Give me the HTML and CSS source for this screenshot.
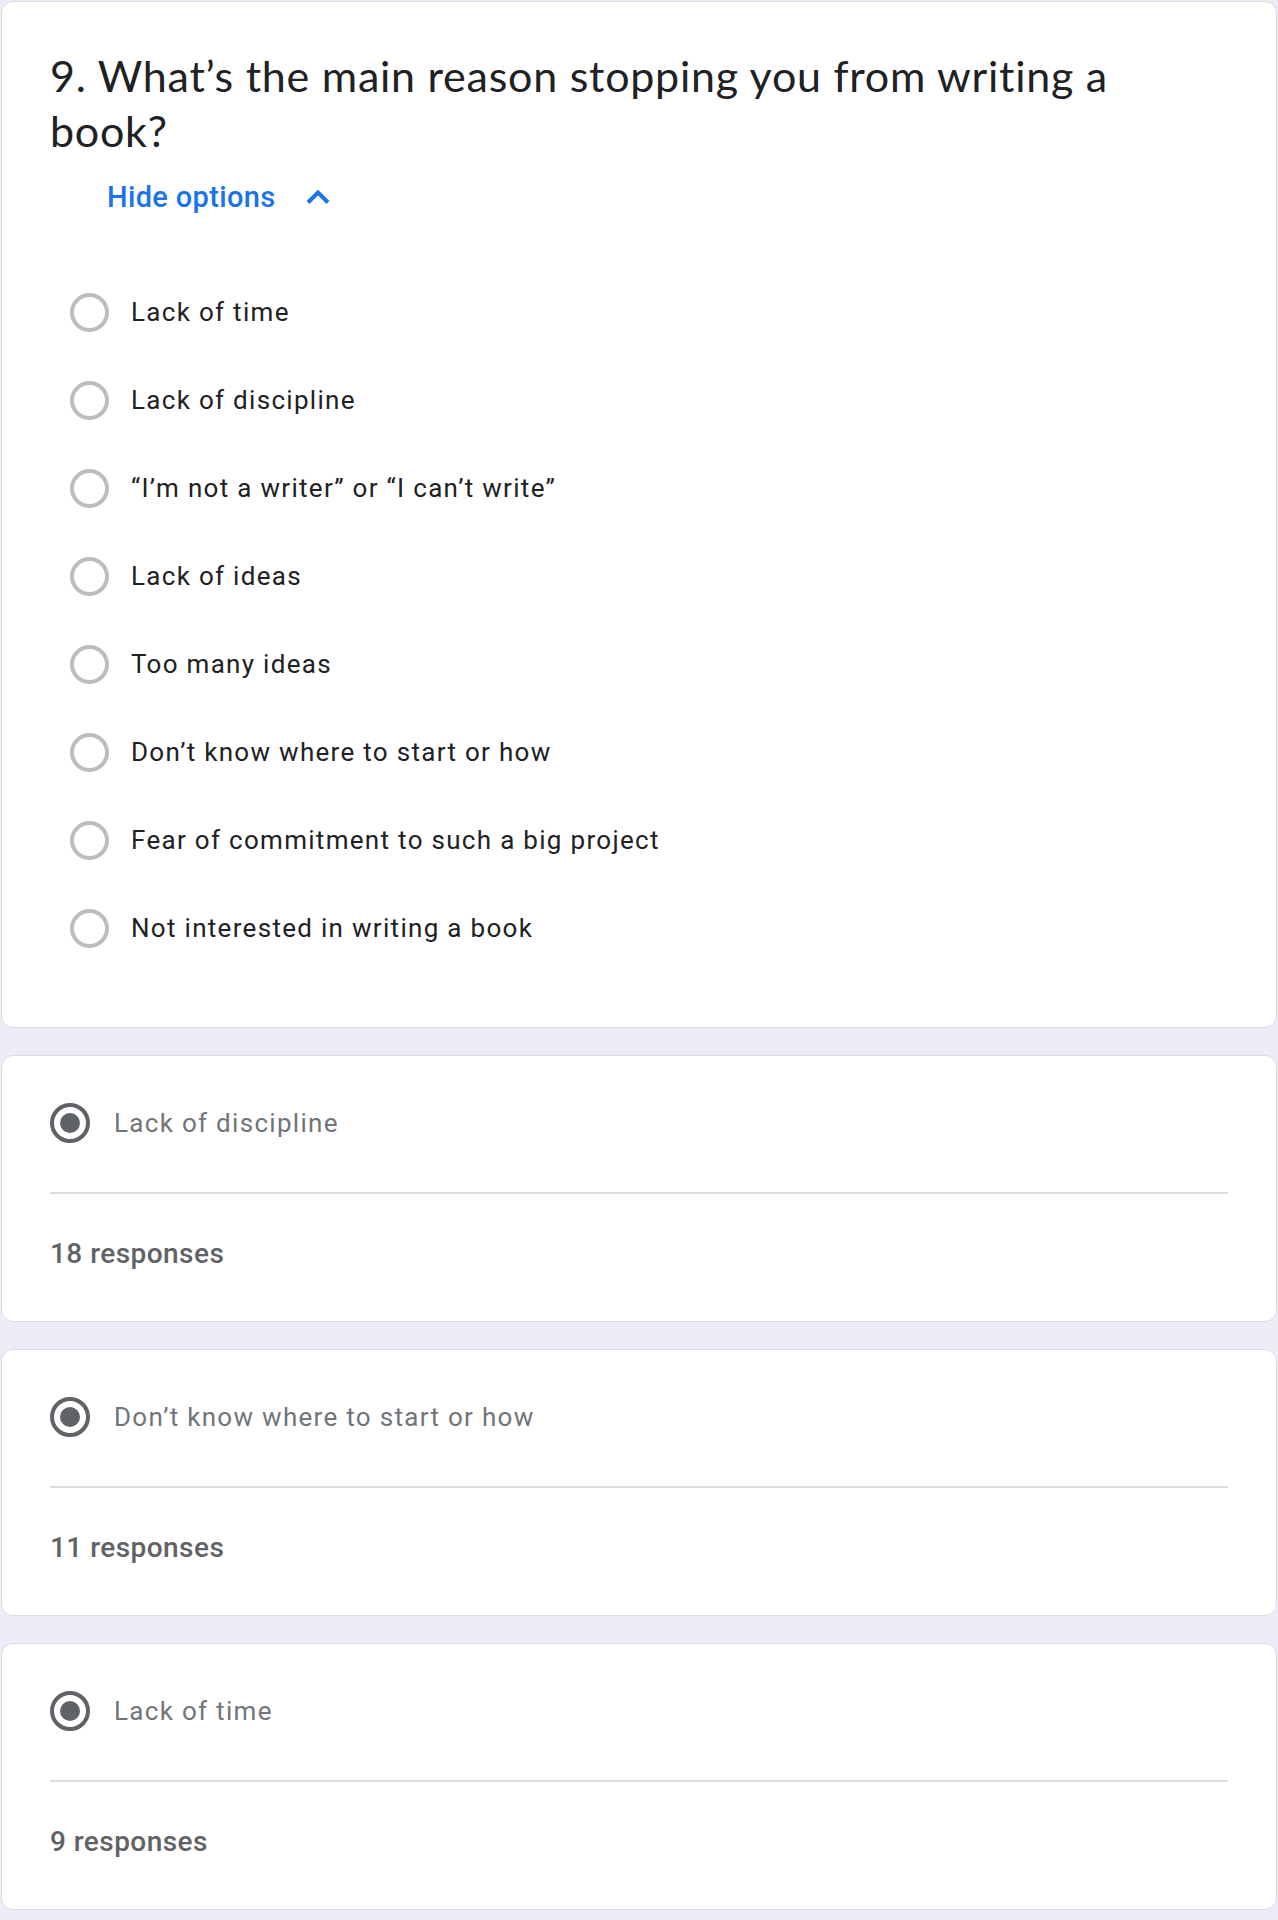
FILE: index.html
```html
<!DOCTYPE html>
<html lang="en">
<head>
<meta charset="utf-8">
<title>Form responses</title>
<link rel="stylesheet" href="styles.css">
</head>
<body>
<main class="page">
  <section class="card question">
    <h1 class="q-title">9. What’s the main reason stopping you from writing a book?</h1>
    <div class="toggle">
      <span class="toggle-label">Hide options</span>
      <svg class="chev" width="26" height="16" viewBox="0 0 26 16" aria-hidden="true"><polyline points="3,13.5 13,3.5 23,13.5" fill="none" stroke="#1a73e8" stroke-width="4"/></svg>
    </div>
    <ul class="options">
      <li class="option"><span class="radio"></span><span class="opt-text">Lack of time</span></li>
      <li class="option"><span class="radio"></span><span class="opt-text">Lack of discipline</span></li>
      <li class="option"><span class="radio"></span><span class="opt-text">“I’m not a writer” or “I can’t write”</span></li>
      <li class="option"><span class="radio"></span><span class="opt-text">Lack of ideas</span></li>
      <li class="option"><span class="radio"></span><span class="opt-text">Too many ideas</span></li>
      <li class="option"><span class="radio"></span><span class="opt-text">Don’t know where to start or how</span></li>
      <li class="option"><span class="radio"></span><span class="opt-text">Fear of commitment to such a big project</span></li>
      <li class="option"><span class="radio"></span><span class="opt-text">Not interested in writing a book</span></li>
    </ul>
  </section>

  <section class="card result">
    <div class="choice"><span class="radio checked"></span><span class="choice-text">Lack of discipline</span></div>
    <hr class="divider">
    <p class="count">18 responses</p>
  </section>

  <section class="card result">
    <div class="choice"><span class="radio checked"></span><span class="choice-text">Don’t know where to start or how</span></div>
    <hr class="divider">
    <p class="count">11 responses</p>
  </section>

  <section class="card result">
    <div class="choice"><span class="radio checked"></span><span class="choice-text">Lack of time</span></div>
    <hr class="divider">
    <p class="count">9 responses</p>
  </section>
</main>
</body>
</html>
```

FILE: styles.css
```css
html, body {
  margin: 0;
  padding: 0;
}

body {
  background: #f0ebf8;
  font-family: Roboto, "Liberation Sans", sans-serif;
  color: #202124;
}

.page {
  display: flex;
  flex-direction: column;
  gap: 27px;
  padding: 1px 1px 0 1px;
}

.card {
  background: #ffffff;
  border: 1px solid #dadce0;
  border-radius: 12px;
  box-sizing: border-box;
}

.question {
  height: 1027px;
  padding: 46px 48px 0 48px;
}

.q-title {
  margin: 0;
  max-width: 1100px;
  font-family: Lato, "Open Sans", sans-serif;
  font-weight: 400;
  font-size: 43px;
  line-height: 55px;
  letter-spacing: 0.75px;
  color: #202124;
}

.toggle {
  display: flex;
  align-items: center;
  gap: 29px;
  height: 40px;
  margin-top: 19px;
  padding-left: 57px;
}

.toggle-label {
  font-family: Roboto, sans-serif;
  font-weight: 500;
  font-size: 29px;
  letter-spacing: 0.35px;
  color: #1a73e8;
}

.chev {
  display: block;
}

.options {
  list-style: none;
  margin: 51px 0 0;
  padding: 0 0 0 20px;
}

.option {
  display: flex;
  align-items: center;
  gap: 22px;
  height: 88px;
}

.radio {
  display: flex;
  align-items: center;
  justify-content: center;
  flex: none;
  width: 39px;
  height: 39px;
  border: 4px solid #bdbdbd;
  border-radius: 50%;
  box-sizing: border-box;
}

.opt-text {
  font-family: Roboto, sans-serif;
  font-size: 26px;
  letter-spacing: 1.3px;
  color: #202124;
}

.result {
  height: 267px;
  padding: 47px 48px 0 48px;
}

.choice {
  display: flex;
  align-items: center;
  gap: 24px;
  height: 40px;
}

.radio.checked {
  width: 40px;
  height: 40px;
  border-color: #5f6368;
}

.radio.checked::after {
  content: "";
  width: 20px;
  height: 20px;
  border-radius: 50%;
  background: #5f6368;
}

.choice-text {
  font-family: Roboto, sans-serif;
  font-size: 26px;
  letter-spacing: 1.3px;
  color: #70757a;
}

.divider {
  border: 0;
  height: 2px;
  background: #dadce0;
  margin: 49px 0 0;
}

.count {
  margin: 42px 0 0;
  font-family: Roboto, sans-serif;
  font-weight: 500;
  font-size: 28px;
  line-height: 36px;
  letter-spacing: 0.45px;
  color: #5f6368;
}
```
